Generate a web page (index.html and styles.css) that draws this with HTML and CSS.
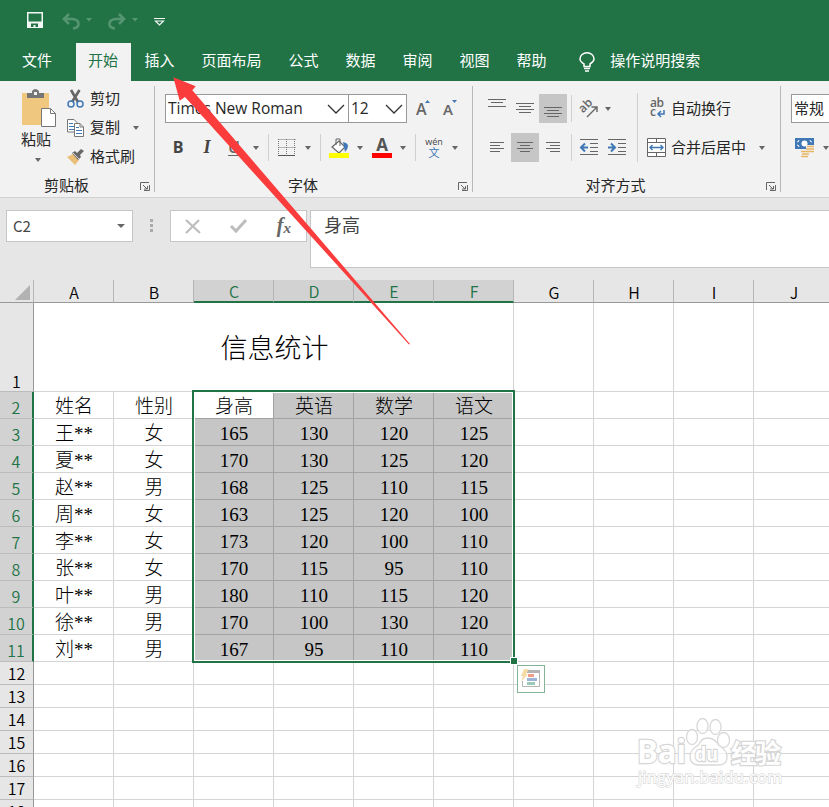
FILE: index.html
```html
<!DOCTYPE html>
<html lang="zh-CN">
<head>
<meta charset="utf-8">
<title>Excel</title>
<link rel="stylesheet" href="styles.css">
</head>
<body>
<header class="quick">
  <svg class="q-save" width="16" height="16" viewBox="0 0 16 16"><path d="M.750.750h14.500v14.500H.750z" fill="none" stroke="#f4f8f5" stroke-width="1.500"/><path d="M1 9.500h14V15H1z" fill="#f4f8f5"/><path d="M4 11.500h7V15H8.500v-2H6.500v2H4z" fill="#217346"/></svg>
  <svg class="q-undo" width="30" height="18" viewBox="0 0 30 18"><path d="M7 1 2 6l5 5M2.500 6H11q6 1 5.500 5.500Q16 15 11 15.500" fill="none" stroke="#559572" stroke-width="2.600"/><path d="M24 5h6l-3 3.500z" fill="#559572"/></svg>
  <svg class="q-redo" width="31" height="18" viewBox="0 0 31 18"><path d="m12 1 5 5-5 5M16.500 6H8Q2 7 2.500 11.500 3 15 8 15.500" fill="none" stroke="#559572" stroke-width="2.600"/><path d="M25 5h6l-3 3.500z" fill="#559572"/></svg>
  <svg class="q-more" width="11" height="9" viewBox="0 0 11 9"><path d="M0 1.500h11M1.500 4h8l-4 4z" fill="none" stroke="#f4f8f5" stroke-width="1.200"/></svg>
</header>
<nav class="tabs">
  <span class="tab file">文件</span><span class="tab active">开始</span><span class="tab">插入</span><span class="tab">页面布局</span><span class="tab">公式</span><span class="tab">数据</span><span class="tab">审阅</span><span class="tab">视图</span><span class="tab">帮助</span>
  <svg class="bulb" width="16" height="20" viewBox="0 0 16 20"><path d="M5 14.500V12Q1 9.500 1 7a7 6.300 0 0 1 14 0q0 2.500-4 5v2.500zM5 16.500h6M6 19h4" fill="none" stroke="#fff" stroke-width="1.500"/></svg>
  <span class="tell">操作说明搜索</span>
</nav>

<section class="ribbon">
  <div class="group clip">
    <div class="clip-body">
      <div class="paste">
        <svg width="36" height="39" viewBox="0 0 36 39"><path d="M1 4h27v32H1z" fill="#efc77f"/><path d="M6 9V4h5V2q3-4 7 0v2h5v5z" fill="#767676"/><path d="M13 3h3v3h-3z" fill="#f2f2f2"/><path d="M20.500 19.500h9l5 5v13h-14z" fill="#fff" stroke="#777"/><path d="M29.500 19.500v5h5" fill="none" stroke="#777"/></svg>
        <span>粘贴</span>
        <i class="dd"></i>
      </div>
      <div class="clip-list">
        <div class="cmd"><svg width="17" height="18" viewBox="0 0 17 18"><path d="M4 0 11 12M12.500 0 5 12" stroke="#666" stroke-width="2.600"/><circle cx="4" cy="14" r="3" fill="none" stroke="#3f78b4" stroke-width="1.500"/><circle cx="13" cy="14" r="3" fill="none" stroke="#3f78b4" stroke-width="1.500"/></svg><span>剪切</span></div>
        <div class="cmd"><svg width="17" height="18" viewBox="0 0 17 18"><path d="M.5.500H7l3 3V13H.5z" fill="#fff" stroke="#777"/><path d="M2 4.500h4M2 7.500h5M2 10.500h5" stroke="#3f78b4"/><path d="M7.500 4.500H13l3.500 3.500v9.500h-9z" fill="#fff" stroke="#777"/><path d="M13 4.500V8h3.500" fill="none" stroke="#777"/><path d="M9 8.500h3M9 11.500h6M9 14.500h6" stroke="#3f78b4"/></svg><span>复制</span><i class="dd"></i></div>
        <div class="cmd"><svg width="17" height="16" viewBox="0 0 17 16"><path d="m0 8 6-3 6 6-4 5z" fill="#eabf78"/><path d="m5 4 3-2 2 2 4-4 3 2-4 4 1 2-3 3z" fill="#686868"/><path d="m6 4 7 7" stroke="#f2f2f2" stroke-width=".8"/></svg><span>格式刷</span></div>
      </div>
    </div>
    <div class="caption">剪贴板<svg class="launch" width="10" height="9" viewBox="0 0 10 9"><path d="M.5 8V.5H9M3 3l4 4M9.500 3v5.500H4M7.500 4v3H4" fill="none" stroke="#666"/></svg></div>
  </div>

  <div class="group font">
    <div class="row r1">
      <div class="combo face">Times New Roman<svg width="18" height="10" viewBox="0 0 18 10"><path d="m1 1 8 8 8-8" fill="none" stroke="#333" stroke-width="1.300"/></svg></div>
      <div class="combo size">12<svg width="18" height="10" viewBox="0 0 18 10"><path d="m1 1 8 8 8-8" fill="none" stroke="#333" stroke-width="1.300"/></svg></div>
      <span class="grow">A<svg width="5" height="3" viewBox="0 0 5 3"><path d="M0 3h5L2.500 0z" fill="#3f78b4"/></svg></span>
      <span class="grow shrink">A<svg width="5" height="3" viewBox="0 0 5 3"><path d="M0 0h5L2.500 3z" fill="#3f78b4"/></svg></span>
    </div>
    <div class="row r2 font-tools">
      <b>B</b><b class="it">I</b><b class="un">U</b><i class="dd"></i><i class="sep"></i>
      <svg width="18" height="18" viewBox="0 0 18 18"><path d="M.5.500h17M.5 8.500h17M.5 0v17M8.500 0v17M16.500 0v17" stroke="#777" stroke-dasharray="1 1"/><path d="M0 16.500h17" stroke="#555"/></svg><i class="dd"></i><i class="sep"></i>
      <svg width="20" height="20" viewBox="0 0 20 20"><path d="m3 9 7-6 6 6-6 6z" fill="#fff" stroke="#666" stroke-width="1.200"/><path d="M7 7V1h4v7" fill="none" stroke="#666"/><path d="M14 4q5 1 5 4t-3 6l-1-5z" fill="#3f78b4"/><path d="M0 15h20v5H0z" fill="#ff0"/></svg><i class="dd"></i>
      <span class="fc">A</span><i class="dd"></i><i class="sep"></i>
      <span class="wen"><small>wén</small><em>文</em></span><i class="dd"></i>
    </div>
    <div class="caption">字体<svg class="launch" width="10" height="9" viewBox="0 0 10 9"><path d="M.5 8V.5H9M3 3l4 4M9.500 3v5.500H4M7.500 4v3H4" fill="none" stroke="#666"/></svg></div>
  </div>

  <div class="group align">
    <div class="align-body">
      <div class="align-left">
        <div class="row r1 a1">
          <svg width="28" height="29" viewBox="0 0 28 29"><path d="M5 5.500h18M8 8.500h12M5 12.500h18" stroke="#666"/></svg>
          <svg width="28" height="29" viewBox="0 0 28 29"><path d="M5 9.500h18M8 12.500h12M5 15.500h18M8 18.500h12" stroke="#666"/></svg>
          <svg class="on" width="28" height="29" viewBox="0 0 28 29"><path d="M5 13.500h18M8 16.500h12M5 19.500h18M8 22.500h12" stroke="#666"/></svg>
          <i class="sep"></i>
          <svg width="24" height="22" viewBox="-2 -3 24 22"><text x="0" y="0" transform="translate(4 12.500) rotate(-45)" font-family="Open Sans" font-size="12" font-weight="600" fill="#666">ab</text><path d="m8 16 10-10M12.500 6h5.500v5" fill="none" stroke="#666" stroke-width="1.400"/></svg><i class="dd"></i>
        </div>
        <div class="row r2 a2">
          <svg width="28" height="29" viewBox="0 0 28 29"><path d="M7 9.500h14M7 12.500h10M7 15.500h14M7 18.500h10" stroke="#666"/></svg>
          <svg class="on" width="28" height="29" viewBox="0 0 28 29"><path d="M6 9.500h16M9 12.500h10M6 15.500h16M9 18.500h10" stroke="#666"/></svg>
          <svg width="28" height="29" viewBox="0 0 28 29"><path d="M7 9.500h14M11 12.500h10M7 15.500h14M11 18.500h10" stroke="#666"/></svg>
          <i class="sep"></i>
          <svg width="18" height="17" viewBox="0 0 18 17"><path d="M0 .5h18M10 4.500h8M10 8.500h8M10 12.500h8M0 15.500h18" stroke="#666"/><path d="M8 8.500H2M5 4.500l-4 4 4 4" fill="none" stroke="#3f78b4" stroke-width="2"/></svg>
          <svg width="18" height="17" viewBox="0 0 18 17"><path d="M0 .5h18M10 4.500h8M10 8.500h8M10 12.500h8M0 15.500h18" stroke="#666"/><path d="M0 8.500h6M3 4.500l4 4-4 4" fill="none" stroke="#3f78b4" stroke-width="2"/></svg>
        </div>
      </div>
      <div class="align-right">
        <div class="row r1 wr"><svg class="wrapico" width="18" height="22" viewBox="0 0 18 22"><text x="1" y="9" textLength="14">ab</text><text x="1" y="18">c</text><path d="M15 12v4H9M12 13l-3 3 3 3" fill="none" stroke="#3f78b4" stroke-width="1.500"/></svg><span>自动换行</span></div>
        <div class="row r2 mg"><svg width="19" height="19" viewBox="0 0 19 19"><path d="M.5.500h18v18H.5zM.5 4.500h18M.5 14.500h18M9.500 0v4M9.500 15v4" fill="#fff" stroke="#666"/><path d="M3 9.500h13M5.500 7 3 9.500 5.500 12M13.500 7 16 9.500 13.500 12" fill="none" stroke="#3f78b4" stroke-width="1.400"/></svg><span>合并后居中</span><i class="dd"></i></div>
      </div>
    </div>
    <div class="caption">对齐方式<svg class="launch" width="10" height="9" viewBox="0 0 10 9"><path d="M.5 8V.5H9M3 3l4 4M9.500 3v5.500H4M7.500 4v3H4" fill="none" stroke="#666"/></svg></div>
  </div>

  <div class="group number">
    <div class="combo fmt">常规</div>
    <div class="row r2 money"><svg width="20" height="19" viewBox="0 0 20 19"><path d="M0 0h19v11H0z" fill="#3f78b4"/><path d="M2 4q2 0 2-2M17 4q-2 0-2-2M2 7q2 0 2 2" stroke="#fff" fill="none"/><circle cx="9.500" cy="5.500" r="3" fill="#fff"/><path d="M11 7h8v9h-8zM6 12h8v7H6z" fill="#f2f2f2"/><path d="M12 8.500h7M11 11h8M12 13.500h7M6 13.500h7M7 16h7M6 18.500h7" stroke="#e8b765" stroke-width="1.600"/></svg><i class="dd"></i></div>
  </div>
</section>

<section class="formula">
  <div class="name">C2<i class="dd"></i></div>
  <svg class="dots" width="3" height="14" viewBox="0 0 3 14"><path d="M0 0h3v3H0zM0 5h3v3H0zM0 10h3v3H0z" fill="#aaa"/></svg>
  <div class="fx">
    <svg width="16" height="15" viewBox="0 0 16 15"><path d="m1 1 14 13M14 1 1 14" stroke="#bdbdbd" stroke-width="2.200"/></svg>
    <svg width="17" height="14" viewBox="0 0 17 14"><path d="m1 7 5 5L16 1" fill="none" stroke="#bdbdbd" stroke-width="3"/></svg>
    <span>f<sub>x</sub></span>
  </div>
  <div class="value">身高</div>
</section>

<main class="sheet">
<table>
<colgroup><col class="c0"><col><col><col><col><col><col><col><col><col><col></colgroup>
<thead><tr><th class="corner"><svg width="15" height="15" viewBox="0 0 15 15"><path d="M15 0v15H0z" fill="#b2b2b2"/></svg></th><th>A</th><th>B</th><th class="s">C</th><th class="s">D</th><th class="s">E</th><th class="s">F</th><th>G</th><th>H</th><th>I</th><th>J</th></tr></thead>
<tbody class="title"><tr><th>1</th><td colspan="6">信息统计</td><td></td><td></td><td></td><td></td></tr></tbody>
<tbody class="data">
<tr><th>2</th><td>姓名</td><td>性别</td><td class="cur">身高</td><td class="s">英语</td><td class="s">数学</td><td class="s">语文</td><td></td><td></td><td></td><td></td></tr>
<tr><th>3</th><td>王**</td><td>女</td><td class="s">165</td><td class="s">130</td><td class="s">120</td><td class="s">125</td><td></td><td></td><td></td><td></td></tr>
<tr><th>4</th><td>夏**</td><td>女</td><td class="s">170</td><td class="s">130</td><td class="s">125</td><td class="s">120</td><td></td><td></td><td></td><td></td></tr>
<tr><th>5</th><td>赵**</td><td>男</td><td class="s">168</td><td class="s">125</td><td class="s">110</td><td class="s">115</td><td></td><td></td><td></td><td></td></tr>
<tr><th>6</th><td>周**</td><td>女</td><td class="s">163</td><td class="s">125</td><td class="s">120</td><td class="s">100</td><td></td><td></td><td></td><td></td></tr>
<tr><th>7</th><td>李**</td><td>女</td><td class="s">173</td><td class="s">120</td><td class="s">100</td><td class="s">110</td><td></td><td></td><td></td><td></td></tr>
<tr><th>8</th><td>张**</td><td>女</td><td class="s">170</td><td class="s">115</td><td class="s">95</td><td class="s">110</td><td></td><td></td><td></td><td></td></tr>
<tr><th>9</th><td>叶**</td><td>男</td><td class="s">180</td><td class="s">110</td><td class="s">115</td><td class="s">120</td><td></td><td></td><td></td><td></td></tr>
<tr><th>10</th><td>徐**</td><td>男</td><td class="s">170</td><td class="s">100</td><td class="s">130</td><td class="s">120</td><td></td><td></td><td></td><td></td></tr>
<tr><th>11</th><td>刘**</td><td>男</td><td class="s">167</td><td class="s">95</td><td class="s">110</td><td class="s">110</td><td></td><td></td><td></td><td></td></tr>
</tbody>
<tbody class="blank">
<tr><th>12</th><td></td><td></td><td></td><td></td><td></td><td></td><td></td><td></td><td></td><td></td></tr>
<tr><th>13</th><td></td><td></td><td></td><td></td><td></td><td></td><td></td><td></td><td></td><td></td></tr>
<tr><th>14</th><td></td><td></td><td></td><td></td><td></td><td></td><td></td><td></td><td></td><td></td></tr>
<tr><th>15</th><td></td><td></td><td></td><td></td><td></td><td></td><td></td><td></td><td></td><td></td></tr>
<tr><th>16</th><td></td><td></td><td></td><td></td><td></td><td></td><td></td><td></td><td></td><td></td></tr>
<tr><th>17</th><td></td><td></td><td></td><td></td><td></td><td></td><td></td><td></td><td></td><td></td></tr>
<tr><th>18</th><td></td><td></td><td></td><td></td><td></td><td></td><td></td><td></td><td></td><td></td></tr>
</tbody>
</table>
<div class="selection"><i></i></div>
<div class="quick-analysis"><svg width="20" height="20" viewBox="0 0 20 20"><path d="M6 1h13v3H6z" fill="#b3b3b3"/><path d="M18.500 3v14.500h-17V12" fill="none" stroke="#b3b3b3"/><path d="M7 5h6v3H7z" fill="#ee9c84"/><path d="M6 9h10v3H6z" fill="#9ab3d6"/><path d="M6 13h8v3H6z" fill="#9ccab9"/><path d="M3 0h5L5 5h2L0 13l2-6H0z" fill="#f5dca6"/></svg></div>
<svg class="mark" width="160" height="80" viewBox="0 0 160 80"><g fill="#fff" fill-opacity=".7" stroke="#d9d9d9" stroke-width="1.300"><ellipse cx="70.500" cy="14" rx="5.500" ry="7.500"/><ellipse cx="83.500" cy="15" rx="5.500" ry="7.500"/><ellipse cx="60" cy="25" rx="5.500" ry="7.500"/><ellipse cx="91.500" cy="28" rx="6" ry="7.500"/><path d="M75.500 26q-6 0-9 7-8.500 5-8.500 11 0 9 9 9h19q9 0 9-8 0-7-8.500-12-4-7-11-7z"/></g><g fill="#fff" stroke="#d6d6d6" stroke-width="2.400" paint-order="stroke"><text x="5" y="51" class="m-bai" textLength="49" lengthAdjust="spacingAndGlyphs">Bai</text><text x="63" y="49" class="m-du" textLength="23" lengthAdjust="spacingAndGlyphs">du</text><text x="99" y="51" class="m-cn" textLength="50">经验</text></g><text x="6" y="71" class="m-url" textLength="144">jingyan.baidu.com</text></svg>
</main>
<svg class="arrow" width="240" height="270" viewBox="172 76 240 270"><path d="m173.300 77.300 22.400 9-3.400 4L410 344l-1 .5L185 97l-5.300 3.700z" fill="#fa3c3c"/></svg>
</body>
</html>
```
FILE: styles.css
```css
* { box-sizing: border-box; }
body { margin: 0; width: 829px; height: 807px; overflow: hidden; position: relative; background: #fff; color: #262626; font: 15px/20px "Open Sans", "Noto Sans CJK SC", sans-serif; }
svg { display: block; flex: none; overflow: visible; }
i.dd { width: 0; height: 0; flex: none; border: 3px solid transparent; border-top: 4px solid #666; border-bottom: 0; }
i.sep { width: 1px; height: 27px; background: #d0d0d0; }

.quick { height: 43px; background: #217346; display: flex; align-items: flex-start; padding-left: 27px; }
.q-save { margin-top: 12px; }
.q-undo { margin: 13px 0 0 19px; }
.q-redo { margin: 13px 0 0 15px; }
.q-more { margin: 17px 0 0 16px; }

.tabs { height: 38px; background: #217346; color: #fff; display: flex; align-items: center; }
.tab { height: 38px; line-height: 35px; padding: 0 13.500px; white-space: nowrap; }
.tab.file { padding: 0 24px 0 22px; }
.tab.active { width: 55px; padding: 0 1px 0 0; text-align: center; background: #f2f2f2; color: #217346; }
.bulb { margin: 0 0 0 19px; }
.tell { margin-left: 15px; line-height: 35px; height: 38px; }

.ribbon { height: 117px; background: #f2f2f2; border-bottom: 1px solid #d2d2d2; display: flex; }
.group { position: relative; height: 116px; flex: none; display: flex; flex-direction: column; }
.group:not(.number)::after { content: ""; position: absolute; right: 0; top: 5px; height: 106px; width: 1px; background: #b8b8b8; }
.clip { width: 155px; }
.font { width: 318px; padding-left: 10px; }
.align { width: 308px; padding-left: 10px; }
.number { width: 48px; padding-left: 10px; }
.caption { position: absolute; left: 0; right: 0; top: 94px; text-align: center; }
.clip .caption { padding-right: 22px; }
.font .caption { padding-right: 22px; }
.align .caption { padding-right: 23px; }
.launch { position: absolute; right: 5px; top: 7px; }
.clip-body { display: flex; padding-top: 8px; }
.paste { width: 38px; margin-left: 17px; display: flex; flex-direction: column; align-items: center; }
.paste svg { margin-left: 5px; }
.paste span { margin-top: 1px; }
.paste .dd { margin-left: 3px; margin-top: 9px; }
.clip-list { margin: -5px 0 0 12px; }
.cmd { height: 29px; display: flex; align-items: center; }
.cmd span { margin-left: 6px; padding-bottom: 2px; }
.cmd .dd { margin-left: 13px; }
.row { display: flex; height: 29px; align-items: center; }
.r1 { margin-top: 13px; }
.r2 { margin-top: 10px; }
.combo { height: 29px; background: #fff; border: 1px solid #999; display: flex; align-items: center; justify-content: space-between; padding: 0 2px 2px; white-space: nowrap; }
.face { width: 184px; font-size: 15.500px; padding-right: 3px; }
.size { width: 59px; margin-left: -1px; font-size: 15.500px; }
.size svg { margin-right: 1px; }
.combo svg { position: relative; top: 1px; }
.grow { width: 15px; margin-left: 9px; font-size: 16px; font-weight: 600; color: #666; position: relative; }
.grow svg { position: absolute; right: 1px; top: 1px; }
.shrink { margin-left: 12px; font-size: 15px; }
.font-tools { display: grid; grid-template-columns: 26px 32px 22px 22px 2px 35px 8px 16px 22px 20px 24px 18px 6px 32px 10px; justify-items: center; }
.font-tools b { color: #444; font-size: 16px; position: relative; top: -1px; }
.font-tools b.it { font: italic bold 18px/20px "Liberation Serif", serif; }
.font-tools b.un { font-weight: 600; text-decoration: underline; text-underline-offset: 2px; color: #666; }
.fc { width: 20px; height: 20px; border-bottom: 5px solid #f00; font-size: 17px; line-height: 13px; font-weight: 700; color: #555; text-align: center; }
.wen { display: flex; flex-direction: column; align-items: center; width: 18px; color: #444; }
.wen small { font-size: 9px; line-height: 9px; }
.wen em { font-style: normal; font-size: 11px; line-height: 13px; color: #3f78b4; }
.align-body { display: flex; }
.align-left { width: 155px; height: 82px; background: linear-gradient(#d0d0d0, #d0d0d0) right 12px / 1px 69px no-repeat; }
.a1 { display: grid; grid-template-columns: 28px 28px 28px 8px 28px 10px; justify-items: center; }
.a2 { display: grid; grid-template-columns: 28px 28px 28px 8px 28px 28px; justify-items: center; }
.on { background: #c6c6c6; }
.wrapico { margin: 0 4px 0 11px; }
.wrapico text { font-size: 12px; font-weight: 600; fill: #666; }
.wr span, .mg span { padding-bottom: 2px; }
.mg svg { margin: 0 5px 0 9px; }
.mg .dd { margin-left: 13px; }
.fmt { margin-top: 13px; width: 60px; }
.number { overflow: hidden; }
.money svg { margin: 0 8px 0 4px; }

.formula { height: 82px; background: #e6e6e6; display: flex; padding: 12px 0 0 6px; }
.name, .fx, .value { background: #fff; border: 1px solid #c6c6c6; height: 32px; flex: none; }
.name { width: 127px; display: flex; align-items: center; justify-content: space-between; padding: 0 7px 0 6px; font-size: 15px; font-family: "Noto Sans CJK SC", sans-serif; color: #444; }
.name .dd { border-width: 4px 4px 0; }
.dots { margin: 9px 17px 0; width: 3px; }
.fx { width: 137px; display: flex; align-items: center; padding: 0 15px 0 14px; justify-content: space-between; color: #666; }
.fx span { font: italic bold 20px/24px "Liberation Serif", serif; }
.fx sub { font-size: 15px; vertical-align: -1px; }
.value { width: 530px; height: 58px; margin-left: 3px; padding: 3px 0 0 13px; font: 18px/20px "Noto Sans CJK SC", sans-serif; color: #444; }

.sheet { position: relative; }
table { width: 834px; table-layout: fixed; border-collapse: separate; border-spacing: 0; }
col { width: 80px; }
col.c0 { width: 34px; }
th, td { padding: 0; height: 23px; overflow: hidden; border-right: 1px solid #d4d4d4; border-bottom: 1px solid #d4d4d4; text-align: center; vertical-align: middle; white-space: nowrap; font-weight: 400; }
th { background: #e6e6e6; color: #000; font: 350 16px/22px "Noto Sans CJK SC", sans-serif; }
tbody th { border-right-color: #999; border-bottom-color: #bbb; vertical-align: middle; }
thead th { border-bottom-color: #999; border-right-color: #b5b5b5; padding: 1px 0 0 1px; line-height: 20px; }
thead th.s { background: #d2d2d2; color: #217346; border-bottom: 2px solid #217346; line-height: 20px; }
.corner svg { margin: 2px 0 0 14px; }
.title th, .title td { height: 89px; }
.title th { vertical-align: bottom; line-height: 20px; }
.title td { font: 300 27px/40px "Noto Sans CJK SC", sans-serif; color: #000; padding-left: 2px; }
.data th, .data td { height: 27px; }
.data th { background: #d2d2d2; color: #217346; border-right: 2px solid #217346; line-height: 22px; padding-top: 4px; }
.data td { font: 300 19px/22px "Liberation Serif", "Noto Sans CJK SC", serif; color: #000; padding: 4px 0 0 1px; }
.data td.s { background: #c6c6c6; border-color: #a2a2a2; }
.data td.cur { border-color: #a2a2a2; }
.selection { position: absolute; left: 192px; top: 110px; width: 323px; height: 273px; border: 2px solid #217346; box-shadow: inset 0 0 0 1px #fff; }
.selection i { position: absolute; right: -4px; bottom: -3px; width: 6px; height: 6px; background: #217346; outline: 1px solid #fff; }
.quick-analysis { position: absolute; left: 517px; top: 385px; width: 28px; height: 28px; background: #fff; border: 1px solid #85b399; padding: 3px; }
.mark { position: absolute; left: 632px; top: 432px; }
.mark text { font-family: "Open Sans", "Noto Sans CJK SC", sans-serif; }
.m-bai { font-size: 32px; font-weight: 700; }
.m-du { font-size: 20px; font-weight: 700; }
.m-cn { font-size: 26px; font-weight: 700; }
.m-url { font-size: 16px; fill: #fff; stroke: #dcdcdc; stroke-width: 1.500px; paint-order: stroke; }
.arrow { position: absolute; left: 172px; top: 76px; }
```
